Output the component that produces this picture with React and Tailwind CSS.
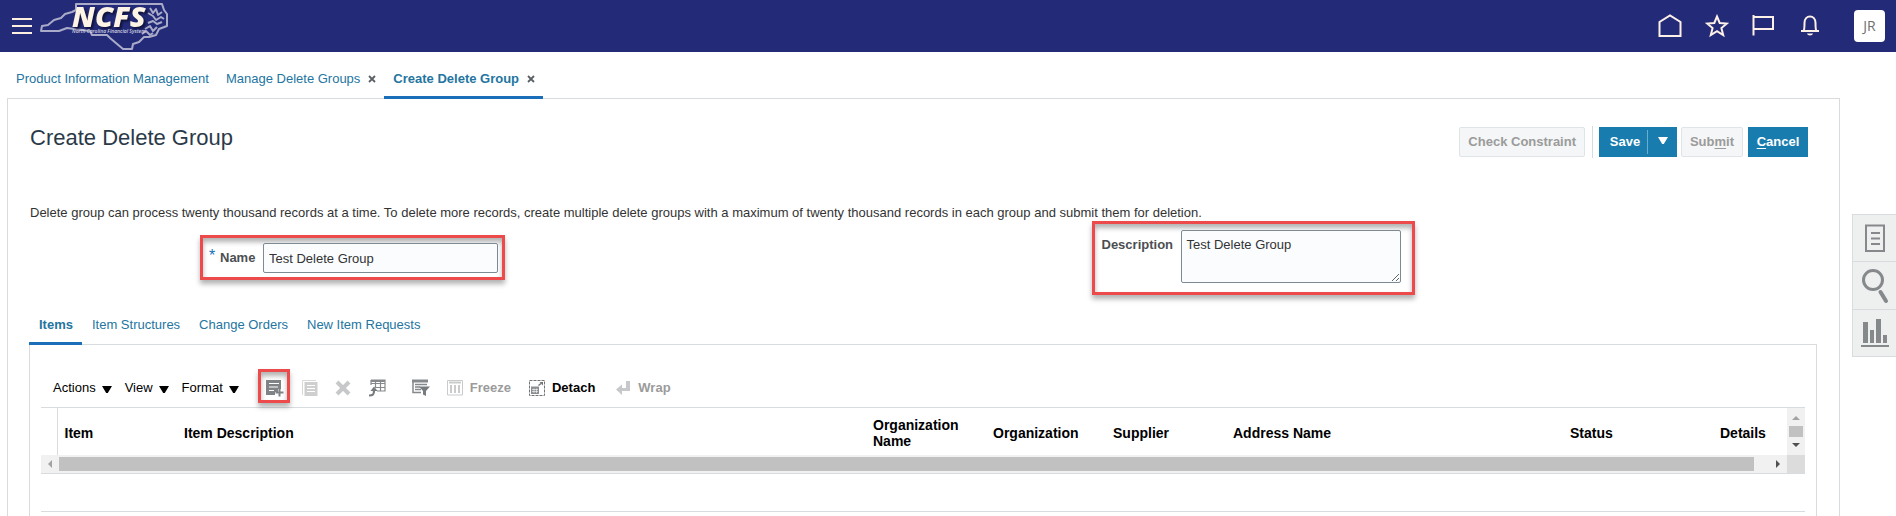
import { useState } from 'react';

const PAGE_TABS = [
  { id: 'pim', label: 'Product Information Management', closable: false },
  { id: 'manage', label: 'Manage Delete Groups', closable: true },
  { id: 'create', label: 'Create Delete Group', closable: true },
];

const ITEM_TABS = ['Items', 'Item Structures', 'Change Orders', 'New Item Requests'];

const COLUMNS = [
  { label: 'Item', width: 'w-[120px]' },
  { label: 'Item Description', width: '' },
  { label: 'Organization Name', width: 'w-[120px]' },
  { label: 'Organization', width: 'w-[120px]' },
  { label: 'Supplier', width: 'w-[120px]' },
  { label: 'Address Name', width: 'w-[337px]' },
  { label: 'Status', width: 'w-[150px]' },
  { label: 'Details', width: 'w-[74px]' },
];

function Logo() {
  return (
    <svg width="130" height="50" viewBox="0 0 130 50" role="img" aria-label="NCFS">
      <g fill="none" stroke="#a9abc8" strokeWidth="2" strokeLinejoin="round">
        <path d="M36 3 L122 3 L124 9 L127 13 L127 25 L119 28 L116 34 L109 36 L104 36 L99 41 L93 43 L92 48 L83 48 L70 37 L67 34 L52 34 L50 30 L27 27 L19 30 L1 30 L2 25 L8 24 L14 19 L21 17 L25 13 L32 11 L36 9 Z" />
        <path d="M110 7 l3 5 l3 -4 l2 6 l4 -3 M108 12 l5 3 l3 4 l5 -3 l3 2 M108 22 l5 -2 l4 3 l5 -2 M105 28 l5 -3 l3 5 l4 -4 M102 33 l4 -3 l4 4 l3 -2" />
      </g>
      <text
        x="32"
        y="26"
        className="drop-shadow-[2px_2px_1px_#10123a]"
        fontFamily="'Open Sans', sans-serif"
        fontSize="29"
        fontWeight="800"
        fontStyle="italic"
        fill="#fdf4e6"
      >
        NCFS
      </text>
      <text x="32" y="32" fontFamily="'Open Sans', sans-serif" fontSize="5" fontWeight="600" fontStyle="italic" fill="#d3d3e2">North Carolina Financial System</text>
    </svg>
  );
}

function Caret({ className }) {
  return (
    <svg className={className} width="10" height="7" viewBox="0 0 10 7" aria-hidden="true">
      <path d="M0 0h10L5.8 7H4.2z" fill="currentColor" />
    </svg>
  );
}

function CloseIcon() {
  return (
    <svg width="8" height="8" viewBox="0 0 8 8" aria-hidden="true">
      <path d="M1 1l6 6M7 1L1 7" stroke="#5c6064" strokeWidth="1.8" />
    </svg>
  );
}

function Header() {
  return (
    <header className="flex h-[52px] items-center bg-[#232b78] pl-3 pr-[11px]">
      <button type="button" aria-label="Navigator">
        <svg className="mt-[-2px]" width="20" height="18" viewBox="0 0 20 18">
          <path d="M0 3h20M0 10h20M0 17h20" stroke="#fdf0e0" strokeWidth="2" />
        </svg>
      </button>
      <a href="#" className="ml-2">
        <Logo />
      </a>
      <div className="ml-auto flex items-center">
        <button type="button" aria-label="Home">
          <svg width="24" height="24" viewBox="0 0 24 24" fill="none" stroke="#fdf0e6" strokeWidth="2">
            <path d="M1.500 22V8L12 1.500 22.500 8v14z" />
          </svg>
        </button>
        <button type="button" aria-label="Favorites" className="ml-[23px]">
          <svg width="24" height="24" viewBox="0 0 24 24" fill="none" stroke="#fdf0e6" strokeWidth="2">
            <path d="M12 2.500l2.700 6.500 7.200.5-5.500 4.500 1.800 7L12 17.200 5.800 21l1.800-7-5.500-4.500 7.200-.5z" />
          </svg>
        </button>
        <button type="button" aria-label="Watchlist" className="ml-[23px]">
          <svg width="22" height="24" viewBox="0 0 22 24" fill="none" stroke="#fdf0e6" strokeWidth="2">
            <path d="M1.500 1v20.500M2 3h19v12H2" />
          </svg>
        </button>
        <button type="button" aria-label="Notifications" className="ml-[27px]">
          <svg width="18" height="24" viewBox="0 0 18 24" fill="none" stroke="#fdf0e6" strokeWidth="2">
            <path d="M0 17h18M2.500 17c1-1 1-3 1-8 0-4 2.500-6.500 5.500-6.500s5.500 2.500 5.500 6.500c0 5 0 7 1 8" />
            <path d="M6 19.500c.5 2.600 5.500 2.600 6 0z" fill="#fdf0e6" stroke="none" />
          </svg>
        </button>
        <button
          type="button"
          className="ml-[35px] h-8 w-[31px] rounded-[4px] bg-white font-['Open_Sans',sans-serif] text-sm text-[#6f6f6f]"
        >
          JR
        </button>
      </div>
    </header>
  );
}

function PageTabs() {
  const [active, setActive] = useState('create');

  return (
    <nav className="flex h-[46px] pl-[7px]">
      {PAGE_TABS.map((tab) => (
        <div
          key={tab.id}
          className={`z-10 flex h-[47px] items-center gap-2 pl-[9px] pr-2 ${
            active === tab.id ? 'border-b-3 border-[#1b6fb8] pt-[10px] font-bold' : 'pt-[7px]'
          }`}
        >
          <button type="button" onClick={() => setActive(tab.id)} className="text-[#24759f]">
            {tab.label}
          </button>
          {tab.closable && (
            <button type="button" aria-label={`Close ${tab.label}`}>
              <CloseIcon />
            </button>
          )}
        </div>
      ))}
    </nav>
  );
}

function PageActions() {
  return (
    <div className="flex items-center font-bold">
      <button type="button" disabled className="h-[30px] rounded-[2px] border border-[#dfe4e7] bg-[#f4f6f7] px-2 text-[#9b9b9b]">
        Check Constraint
      </button>
      <div className="ml-[7px] mr-[6px] h-8 w-px bg-[#d6dbde]" />
      <div className="flex h-[30px] items-center bg-[#187dae] text-white">
        <button type="button" className="w-12 pl-1">Save</button>
        <div className="h-6 w-px bg-[#6aadce]" />
        <button type="button" aria-label="More save options" className="flex h-full w-[29px] items-center justify-center">
          <Caret className="mb-1" />
        </button>
      </div>
      <button type="button" disabled className="ml-1 h-[30px] w-[62px] rounded-[2px] border border-[#dfe4e7] bg-[#f4f6f7] text-[#9b9b9b]">
        Sub<span className="underline underline-offset-2">m</span>it
      </button>
      <button type="button" className="ml-[5px] h-[30px] w-[60px] bg-[#187dae] text-white">
        <span className="underline underline-offset-2">C</span>ancel
      </button>
    </div>
  );
}

function GroupForm() {
  const [name, setName] = useState('Test Delete Group');
  const [description, setDescription] = useState('Test Delete Group');

  return (
    <div className="grid grid-cols-2 items-start">
      <div className="pl-[170px] pt-[14px]">
        <div className="flex h-[45px] w-[305px] items-center border-3 border-[#ec4a4b] pl-[6px] shadow-[0_4px_5px_rgba(0,0,0,0.3),inset_0_4px_5px_rgba(0,0,0,0.3)]">
          <span className="mb-1 w-[11px] text-base text-[#1b6fb8]">*</span>
          <label htmlFor="group-name" className="font-bold text-[#4c4f52]">Name</label>
          <input
            id="group-name"
            value={name}
            onChange={(e) => setName(e.target.value)}
            className="ml-auto mr-1 h-[30px] w-[235px] rounded-[2px] border border-[#7d8a93] bg-[#fafcfe] px-[5px] pt-[2px] text-[#333]"
          />
        </div>
      </div>
      <div className="pl-[168px]">
        <div className="flex h-[74px] w-[323px] items-start border-3 border-[#ec4a4b] pl-[7px] pt-[6px] shadow-[0_4px_5px_rgba(0,0,0,0.3),inset_0_4px_5px_rgba(0,0,0,0.3)]">
          <label htmlFor="group-description" className="mt-[7px] font-bold text-[#4c4f52]">Description</label>
          <textarea
            id="group-description"
            value={description}
            onChange={(e) => setDescription(e.target.value)}
            className="ml-auto mr-[11px] h-[53px] w-[220px] rounded-[2px] border border-[#7d8a93] bg-[#fafcfe] px-[5px] py-[6px] text-[#333]"
          />
        </div>
      </div>
    </div>
  );
}

function AddRowIcon() {
  return (
    <svg width="18" height="18" viewBox="0 0 18 18" aria-hidden="true">
      <path d="M0 1h15v9h-3v3H9v3H0z" fill="#7f8385" />
      <path d="M3 4.500h10M3 8h9M3 11.500h5" stroke="#fff" strokeWidth="1.200" />
      <path d="M13.500 9.500v8M9.500 13.500h8" stroke="#7f8385" strokeWidth="2" />
    </svg>
  );
}

function DuplicateIcon() {
  return (
    <svg width="16" height="16" viewBox="0 0 16 16" aria-hidden="true">
      <path d="M.5 15V.5H14" fill="none" stroke="#d9d9d9" />
      <path d="M2.500 2h13v14h-13z" fill="#cfcfcf" />
      <path d="M5 5.500h8M5 8.500h8M5 11.500h8" stroke="#fff" strokeWidth="1.200" />
    </svg>
  );
}

function DeleteIcon() {
  return (
    <svg width="16" height="16" viewBox="0 0 16 16" aria-hidden="true">
      <path d="M2 2l12 12M14 2L2 14" stroke="#c6c8c9" strokeWidth="4" />
    </svg>
  );
}

function ExportIcon() {
  return (
    <svg width="18" height="18" viewBox="0 0 18 18" fill="none" aria-hidden="true">
      <path d="M3 1h14v11H9M3 1v5M3 4.500h14M7 8.500h10M7.500 1v7M12.500 1v11" stroke="#85898b" strokeWidth="1.200" />
      <path d="M3 2h14" stroke="#85898b" strokeWidth="2" />
      <path d="M1 16.500c4 0 5-1 5-5" stroke="#777b7d" strokeWidth="2.200" />
      <path d="M2.500 12L6 7.500 9.500 12z" fill="#777b7d" />
    </svg>
  );
}

function FilterIcon() {
  return (
    <svg width="18" height="18" viewBox="0 0 18 18" fill="none" aria-hidden="true">
      <path d="M0 2h16" stroke="#85898b" strokeWidth="3" />
      <path d="M1 1v12.500h8M3 5.500h12M3 8h5M3 10.500h6" stroke="#85898b" strokeWidth="1.500" />
      <path d="M7 7.500h11l-4 4.500v5l-3-1.500V12z" fill="#777b7d" />
    </svg>
  );
}

function FreezeIcon() {
  return (
    <svg width="16" height="16" viewBox="0 0 16 16" fill="none" stroke="#c9cbcc" aria-hidden="true">
      <path d="M.5.5h15v14.500H.5z" />
      <path d="M2 2.500h12M4 5v8M8 5v8M12 5v8" strokeWidth="2" />
    </svg>
  );
}

function DetachIcon() {
  return (
    <svg width="16" height="16" viewBox="0 0 16 16" fill="none" aria-hidden="true">
      <path d="M.5.5h15v15H.5z" stroke="#6f7375" strokeDasharray="3 1" />
      <path d="M2 6.500h8V14H2z" fill="#8b8f91" />
      <path d="M3 9.500h6M3 11.500h6M5 8.500V13M7.500 8.500V13" stroke="#fff" strokeWidth=".6" />
      <path d="M9.500 5.500L12 3.500" stroke="#6f7375" strokeWidth="1.500" />
      <path d="M10.500 2H14v3.500z" fill="#6f7375" />
    </svg>
  );
}

function WrapIcon() {
  return (
    <svg width="15" height="16" viewBox="0 0 15 16" aria-hidden="true">
      <path d="M10 1h4v10H6v4L0 9.500 6 4.500V8h4z" fill="#c6c8c9" />
    </svg>
  );
}

function Toolbar() {
  return (
    <div className="flex h-[38px] items-center pl-3 text-black">
      <button type="button" className="flex items-center gap-[6px]">Actions <Caret className="mt-[2px]" /></button>
      <button type="button" className="ml-[13px] flex items-center gap-[6px]">View <Caret className="mt-[2px]" /></button>
      <button type="button" className="ml-[13px] flex items-center gap-[6px]">Format <Caret className="mt-[2px]" /></button>
      <button
        type="button"
        aria-label="Select and Add"
        className="ml-[19px] flex h-[34px] w-8 items-center justify-center self-start border-3 border-[#ec4a4b] pl-[2px] pt-1 shadow-[0_4px_5px_rgba(0,0,0,0.3),inset_0_4px_5px_rgba(0,0,0,0.3)]"
      >
        <AddRowIcon />
      </button>
      <button type="button" aria-label="Duplicate" disabled className="ml-3"><DuplicateIcon /></button>
      <button type="button" aria-label="Delete" disabled className="ml-[17px]"><DeleteIcon /></button>
      <button type="button" aria-label="Export to Excel" className="ml-[17px]"><ExportIcon /></button>
      <button type="button" aria-label="Query By Example" className="ml-[26px]"><FilterIcon /></button>
      <button type="button" disabled className="ml-[17px] flex items-center gap-[7px] font-bold text-[#9b9b9b]">
        <FreezeIcon /> Freeze
      </button>
      <button type="button" className="ml-[18px] flex items-center gap-[7px] font-bold">
        <DetachIcon /> Detach
      </button>
      <button type="button" disabled className="ml-[21px] flex items-center gap-[7px] font-bold text-[#9b9b9b]">
        <WrapIcon /> Wrap
      </button>
    </div>
  );
}

function ItemsTable() {
  return (
    <div className="border-y border-[#d9dcde]">
      <div className="flex">
        <table className="h-[47px] flex-1 table-fixed border-collapse text-left text-sm leading-4 text-black">
          <thead>
            <tr>
              <th className="w-4 border-r border-[#d9dcde]" />
              {COLUMNS.map((col) => (
                <th key={col.label} scope="col" className={`${col.width} pl-[7px] pr-1 pt-[3px] align-middle font-bold`}>
                  {col.label}
                </th>
              ))}
            </tr>
          </thead>
        </table>
        <div className="flex w-[18px] flex-col items-center justify-between bg-[#f1f1f1] pb-2 pt-2">
          <svg width="8" height="4" viewBox="0 0 8 4"><path d="M0 4l4-4 4 4z" fill="#a3a3a3" /></svg>
          <div className="h-[11px] w-[14px] bg-[#c1c1c1]" />
          <svg width="8" height="4" viewBox="0 0 8 4"><path d="M0 0l4 4 4-4z" fill="#505050" /></svg>
        </div>
      </div>
      <div className="flex h-[18px] items-center bg-[#f1f1f1]">
        <svg className="ml-[7px]" width="4" height="8" viewBox="0 0 4 8"><path d="M4 0L0 4l4 4z" fill="#a3a3a3" /></svg>
        <div className="ml-[7px] h-[14px] flex-1 bg-[#c1c1c1]" />
        <svg className="ml-[22px] mr-[7px]" width="4" height="8" viewBox="0 0 4 8"><path d="M0 0l4 4-4 4z" fill="#505050" /></svg>
        <div className="h-full w-[18px] bg-[#dcdcdc]" />
      </div>
    </div>
  );
}

function SideBar() {
  return (
    <aside className="mt-[116px] flex w-11 flex-col self-start border-l border-t border-[#d9dcde] bg-[#eeefef]">
      <button type="button" aria-label="Details" className="flex h-[47px] items-center justify-center border-b border-[#d9dcde]">
        <svg width="20" height="28" viewBox="0 0 20 28" fill="none" stroke="#85898b" strokeWidth="2">
          <path d="M1 1.500h18V27H1zM6 9h9M6 14.500h9M6 20h9" />
        </svg>
      </button>
      <button type="button" aria-label="Search" className="flex h-12 items-center justify-center border-b border-[#d9dcde]">
        <svg width="28" height="36" viewBox="0 0 28 36" fill="none" stroke="#85898b">
          <circle cx="12" cy="12" r="9.500" strokeWidth="3" />
          <path d="M19.500 24L25 33" strokeWidth="4" strokeLinecap="round" />
        </svg>
      </button>
      <button type="button" aria-label="Analytics" className="flex h-[47px] items-center justify-center border-b border-[#d9dcde]">
        <svg width="28" height="30" viewBox="0 0 28 30" fill="#85898b">
          <path d="M2 4h5v21H2zM9 12h4v13H9zM15 1h5v24h-5zM22 17h4v8h-4zM0 27h28v2H0z" />
        </svg>
      </button>
    </aside>
  );
}

export default function App() {
  const [itemTab, setItemTab] = useState('Items');

  return (
    <div className="flex min-h-screen flex-col bg-white font-['Liberation_Sans',Arial,sans-serif] text-[13px] leading-4 text-[#333]">
      <Header />
      <PageTabs />

      <div className="flex flex-1">
        <main className="ml-[7px] mr-3 flex flex-1 flex-col border-x border-t border-[#d9dcde] pl-[21px] pr-[22px]">
          {/* Title, actions and group fields */}
          <div className="pl-px">
            <div className="flex items-start justify-between pr-[9px] pt-[27px]">
              <h1 className="text-[22px] leading-6 text-[#2b3a48]">Create Delete Group</h1>
              <PageActions />
            </div>

            <p className="mt-[47px]">
              Delete group can process twenty thousand records at a time. To delete more records, create multiple delete
              groups with a maximum of twenty thousand records in each group and submit them for deletion.
            </p>

            <GroupForm />
          </div>

          {/* Item tabs */}
          <div className="mt-[14px] flex h-[35px]">
            {ITEM_TABS.map((tab) => (
              <button
                key={tab}
                type="button"
                onClick={() => setItemTab(tab)}
                className={`z-10 h-9 pl-[10px] text-[#24759f] ${
                  itemTab === tab ? 'border-b-3 border-[#1b6fb8] pr-[9px] pb-[2px] font-bold' : 'pr-[9px] pb-[5px]'
                }`}
              >
                {tab}
              </button>
            ))}
          </div>

          <section className="flex-1 border-x border-t border-[#d9dcde] pl-[11px] pr-[11px] pt-[24px]">
            <Toolbar />
            <ItemsTable />
            <div className="mt-[37px] border-t border-[#d9dcde]" />
          </section>
        </main>

        <SideBar />
      </div>
    </div>
  );
}
